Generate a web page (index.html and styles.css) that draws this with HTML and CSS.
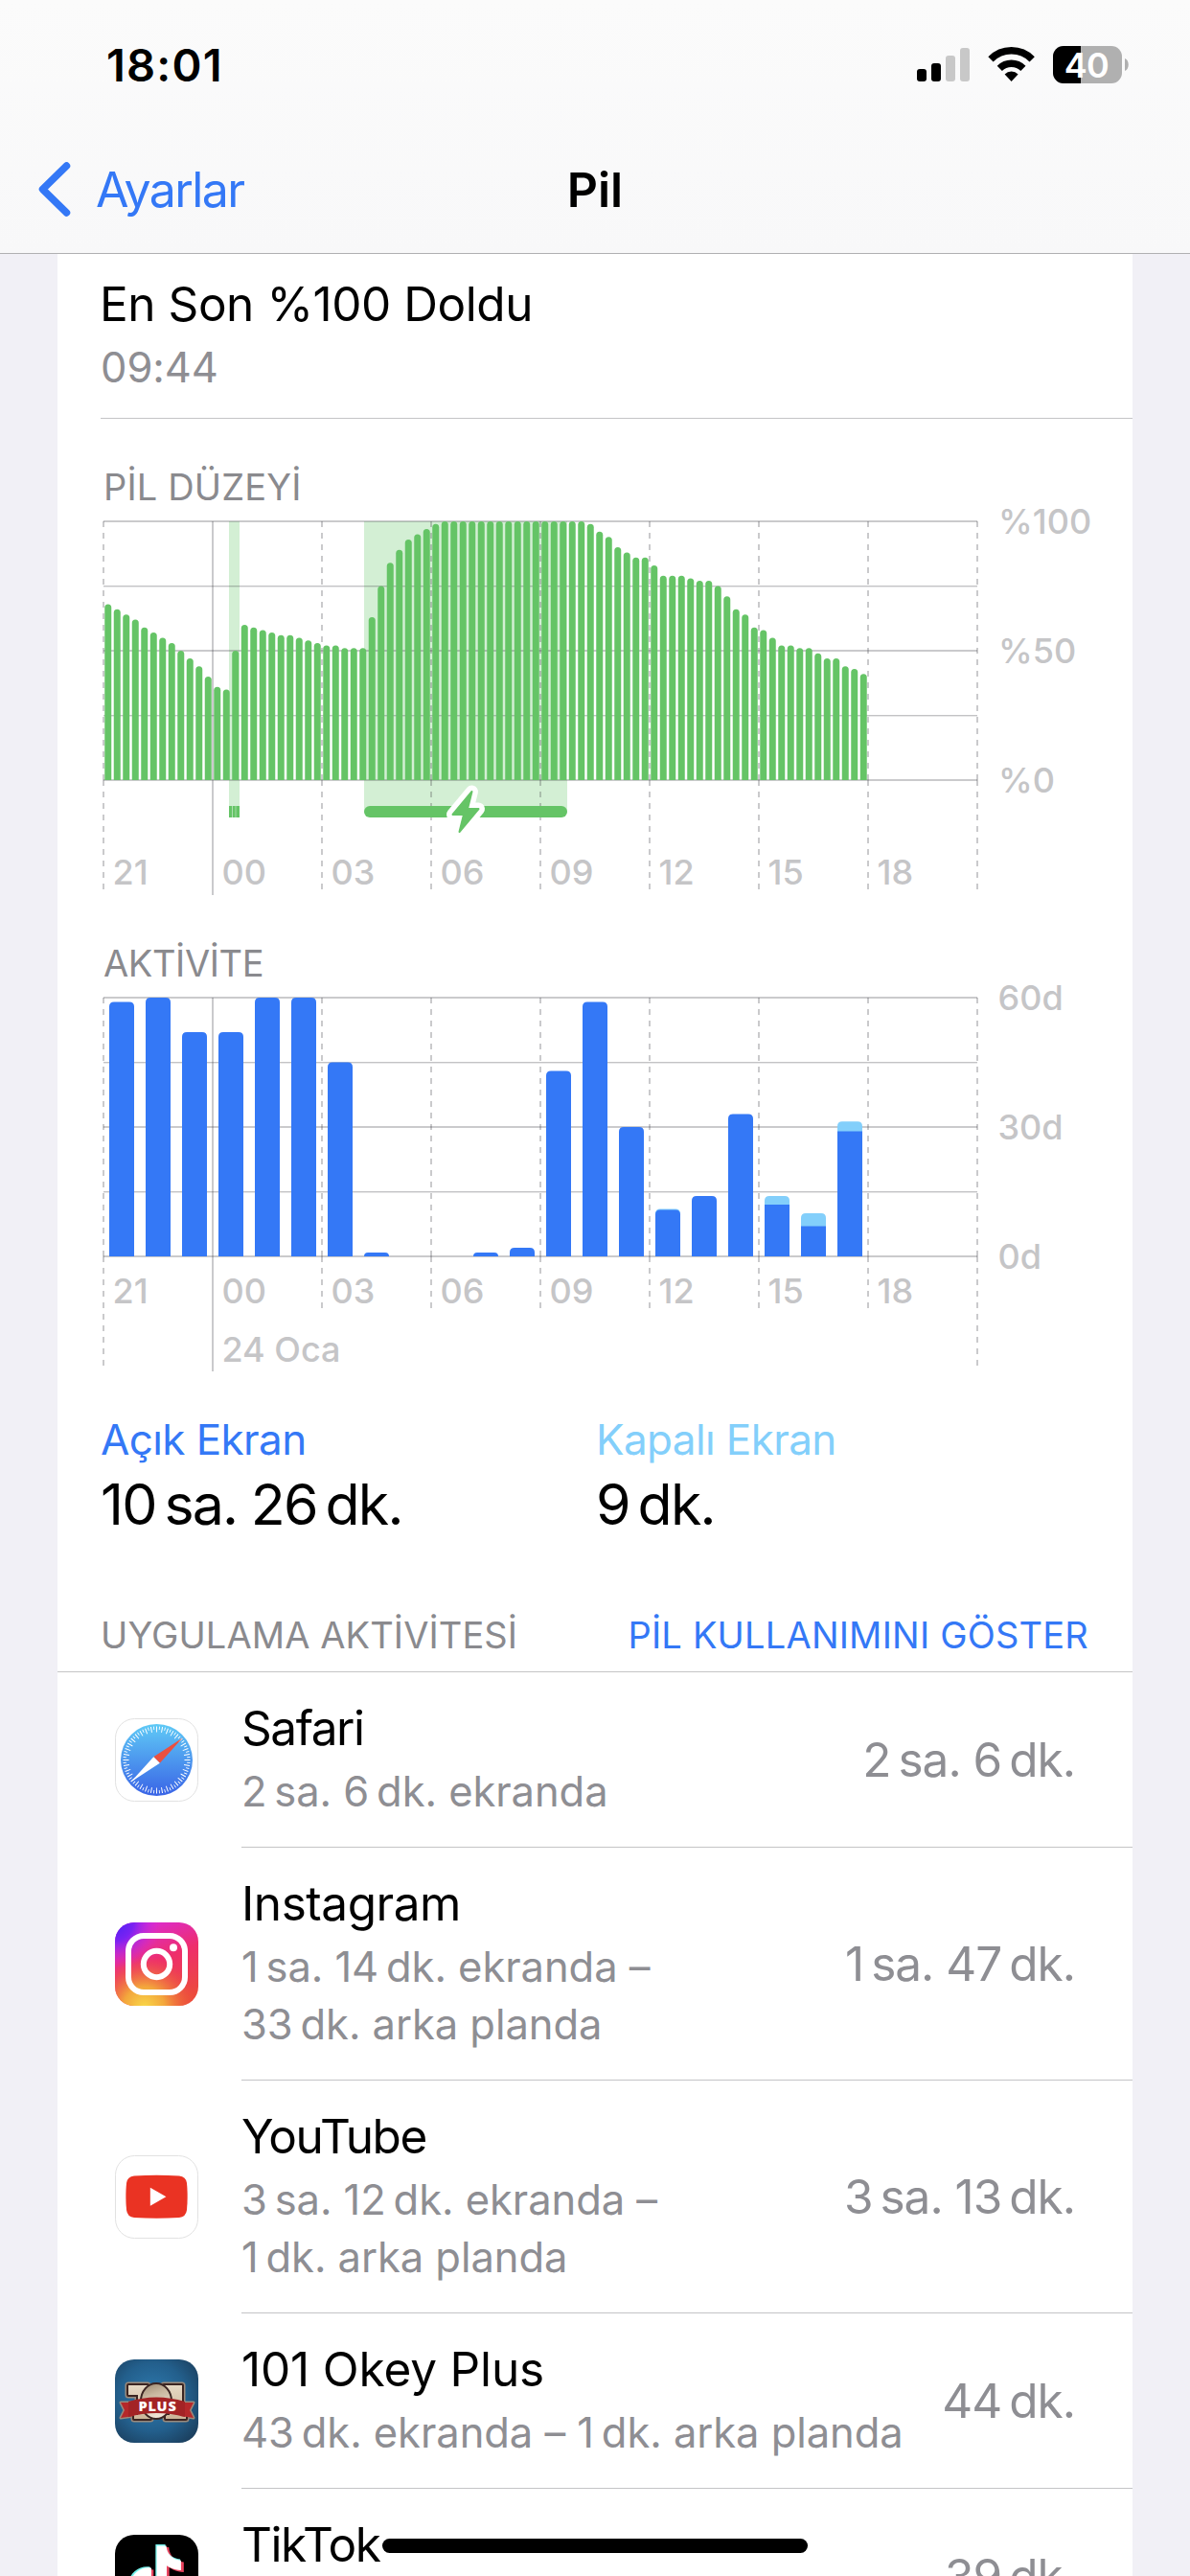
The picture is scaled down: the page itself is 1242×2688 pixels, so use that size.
FILE: index.html
```html
<!DOCTYPE html>
<html lang="tr">
<head>
    <meta charset="UTF-8">
    <meta name="viewport" content="width=device-width, initial-scale=1.0">
    <title>Pil</title>
    <link rel="stylesheet" href="styles.css">
</head>
<body>
    <header class="header">
        <div class="status-bar">
            <span class="clock">18:01</span>
            <svg class="status-icons" width="222" height="40" viewBox="0 0 222 40">
                <rect x="1" y="24" width="10" height="13" rx="3"/>
                <rect x="16" y="18" width="10" height="19" rx="3"/>
                <rect x="31" y="10" width="10" height="27" rx="3" fill="#c8c8c8"/>
                <rect x="46" y="2" width="10" height="35" rx="3" fill="#c8c8c8"/>
                <g fill="none" stroke="#000" stroke-width="7.4">
                    <path d="M78.4 13.9A30.2 30.2 0 0 1 121.6 13.9" transform="translate(-0.4 0)"/>
                    <path d="M87.3 23.3A17.6 17.6 0 0 1 111.9 23.3"/>
                </g>
                <path d="M99.6 37l-7-7.6a10 10 0 0 1 14 0z"/>
                <clipPath id="cell"><rect x="143" y="0" width="72" height="39" rx="11"/></clipPath>
                <g clip-path="url(#cell)">
                    <rect x="143" y="0" width="72" height="39" fill="#b0b0b0"/>
                    <rect x="143" y="0" width="29" height="39"/>
                </g>
                <path d="M218 13c5 2 5 11 0 13z" fill="#b0b0b0"/>
                <text class="cell-text" x="178" y="32.5" text-anchor="middle">40</text>
            </svg>
        </div>
        <nav class="nav-bar">
            <a class="back">
                <svg width="61" height="60" viewBox="0 0 61 60">
                    <path d="M30.5 5L5.5 29.5L30.5 54" fill="none" stroke="#3478f6" stroke-width="7.5" stroke-linecap="round" stroke-linejoin="round"/>
                </svg>
                <span>Ayarlar</span>
            </a>
            <h1>Pil</h1>
        </nav>
    </header>

    <main class="card">
        <section class="last-charge">
            <div class="title">En Son %100 Doldu</div>
            <div class="subtitle">09:44</div>
        </section>

        <h2 class="chart-title">PİL DÜZEYİ</h2>
        <svg id="levelChart" class="chart" width="1122" height="416"></svg>

        <h2 class="chart-title activity-title">AKTİVİTE</h2>
        <svg id="activityChart" class="chart" width="1122" height="416"></svg>

        <section class="totals">
            <div>
                <div class="total-label on">Açık Ekran</div>
                <div class="total-value">10&#8239;sa. 26&#8239;dk.</div>
            </div>
            <div>
                <div class="total-label off">Kapalı Ekran</div>
                <div class="total-value">9&#8239;dk.</div>
            </div>
        </section>

        <div class="list-header">
            <span>UYGULAMA AKTİVİTESİ</span>
            <a>PİL KULLANIMINI GÖSTER</a>
        </div>

        <ul class="apps">
            <li class="app">
                <svg class="icon" viewBox="0 0 87 87">
                    <defs>
                        <linearGradient id="sky" x1="0" y1="0" x2="0" y2="1">
                            <stop offset="0" stop-color="#5fcaf6"/>
                            <stop offset="1" stop-color="#3a64e6"/>
                        </linearGradient>
                    </defs>
                    <rect x=".5" y=".5" width="86" height="86" rx="20" fill="#fff" stroke="#e2e2e2"/>
                    <circle cx="43.5" cy="43.5" r="37.5" fill="url(#sky)"/>
                    <circle cx="43.5" cy="43.5" r="32" fill="none" stroke="#fff" stroke-width="6" stroke-dasharray=".35 1.65" stroke-dashoffset=".17" pathLength="72"/>
                    <circle cx="43.5" cy="43.5" r="33.3" fill="none" stroke="#fff" stroke-width="3.4" stroke-dasharray=".3 1.7" stroke-dashoffset="-.85" pathLength="72"/>
                    <path d="M70.5 20.5L40.3 40.3L46.8 46.8z" fill="#eb5040"/>
                    <path d="M16.5 66.5L40.3 40.3L46.8 46.8z" fill="#fff"/>
                </svg>
                <div class="info">
                    <div class="title tight">Safari</div>
                    <div class="subtitle">2&#8239;sa. 6&#8239;dk. ekranda</div>
                </div>
                <div class="time">2&#8239;sa. 6&#8239;dk.</div>
            </li>
            <li class="app">
                <svg class="icon" viewBox="0 0 87 87">
                    <defs>
                        <linearGradient id="igBase" x1=".2" y1="0" x2=".6" y2="1">
                            <stop offset="0" stop-color="#d82be0"/>
                            <stop offset=".5" stop-color="#ee2e6c"/>
                            <stop offset="1" stop-color="#ec4a3c"/>
                        </linearGradient>
                        <radialGradient id="igGold" cx=".35" cy="1.02" r=".62">
                            <stop offset="0" stop-color="#f9d848"/>
                            <stop offset=".4" stop-color="#f3a63c"/>
                            <stop offset="1" stop-color="#ee5a3a" stop-opacity="0"/>
                        </radialGradient>
                        <radialGradient id="igViolet" cx="0" cy="0" r=".55">
                            <stop offset="0" stop-color="#4a22f4"/>
                            <stop offset=".4" stop-color="#7a22f2"/>
                            <stop offset="1" stop-color="#d82be0" stop-opacity="0"/>
                        </radialGradient>
                    </defs>
                    <rect width="87" height="87" rx="20" fill="url(#igBase)"/>
                    <rect width="87" height="87" rx="20" fill="url(#igGold)"/>
                    <rect width="87" height="87" rx="20" fill="url(#igViolet)"/>
                    <g fill="none" stroke="#fff" stroke-width="6">
                        <rect x="14" y="14" width="59" height="59" rx="16"/>
                        <circle cx="43.5" cy="43.5" r="13.7"/>
                    </g>
                    <circle cx="61" cy="26.3" r="4" fill="#fff"/>
                </svg>
                <div class="info">
                    <div class="title">Instagram</div>
                    <div class="subtitle">1&#8239;sa. 14&#8239;dk. ekranda –<br>33&#8239;dk. arka planda</div>
                </div>
                <div class="time">1&#8239;sa. 47&#8239;dk.</div>
            </li>
            <li class="app">
                <svg class="icon" viewBox="0 0 87 87">
                    <rect x=".5" y=".5" width="86" height="86" rx="20" fill="#fff" stroke="#e2e2e2"/>
                    <path d="M20 21.5Q43.5 20 67 21.5Q74 22 75 29Q76.3 43 75 57Q74 64.5 67 65Q43.5 66.3 20 65Q13 64.5 12 57Q10.7 43 12 29Q13 22 20 21.5z" fill="#ea3323"/>
                    <path d="M36.8 33.7v19l16.6-9.5z" fill="#fff"/>
                </svg>
                <div class="info">
                    <div class="title tight">YouTube</div>
                    <div class="subtitle">3&#8239;sa. 12&#8239;dk. ekranda –<br>1&#8239;dk. arka planda</div>
                </div>
                <div class="time">3&#8239;sa. 13&#8239;dk.</div>
            </li>
            <li class="app">
                <svg class="icon" viewBox="0 0 87 87">
                    <defs>
                        <radialGradient id="felt" cx=".45" cy=".45" r=".68">
                            <stop offset="0" stop-color="#2f7bb0"/>
                            <stop offset=".6" stop-color="#235f8c"/>
                            <stop offset="1" stop-color="#1b3f5e"/>
                        </radialGradient>
                        <linearGradient id="bone" x1="0" y1="0" x2="0" y2="1">
                            <stop offset="0" stop-color="#e6d8c4"/>
                            <stop offset="1" stop-color="#cbb498"/>
                        </linearGradient>
                        <linearGradient id="zero" x1="0" y1="0" x2=".3" y2="1">
                            <stop offset="0" stop-color="#98856e"/>
                            <stop offset=".4" stop-color="#c9b8a0"/>
                            <stop offset="1" stop-color="#efe4d6"/>
                        </linearGradient>
                    </defs>
                    <rect width="87" height="87" rx="20" fill="url(#felt)"/>
                    <g stroke-linejoin="round">
                        <path d="M14 27h20v31h3v4H20v-4h4V37H14zM51 27h19v31h4v4H53v-4h4V37h-6z" fill="#9a8a7c" stroke="#9a8a7c" stroke-width="7"/>
                        <path d="M6 45h14v14l-14 2 4-8zM82 45H68v14l14 2-4-8z" fill="#9a8a7c" stroke="#9a8a7c" stroke-width="3"/>
                        <path d="M14 27h20v31h3v4H20v-4h4V37H14zM51 27h19v31h4v4H53v-4h4V37h-6z" fill="url(#bone)" stroke="#3b2522" stroke-width="4"/>
                        <path d="M14 27h20v31h3v4H20v-4h4V37H14zM51 27h19v31h4v4H53v-4h4V37h-6z" fill="url(#bone)"/>
                        <ellipse cx="43" cy="43.5" rx="16" ry="18.5" fill="url(#zero)" stroke="#3b2522" stroke-width="2"/>
                        <path d="M6 45h14v14l-14 2 4-8zM82 45H68v14l14 2-4-8z" fill="#b5282a"/>
                        <path d="M14 44q29-9 59 0v16q-30-8-59 0z" fill="#a32325"/>
                    </g>
                    <text class="plus" x="44.5" y="54" text-anchor="middle">PLUS</text>
                </svg>
                <div class="info">
                    <div class="title okey">101 Okey Plus</div>
                    <div class="subtitle">43&#8239;dk. ekranda – 1&#8239;dk. arka planda</div>
                </div>
                <div class="time">44&#8239;dk.</div>
            </li>
            <li class="app">
                <svg class="icon" viewBox="0 0 87 87">
                    <defs>
                        <path id="note" d="M12.525.02c1.31-.02 2.61-.01 3.91-.02.08 1.53.63 3.09 1.75 4.17 1.12 1.11 2.7 1.62 4.24 1.79v4.03c-1.44-.05-2.89-.35-4.2-.97-.57-.26-1.1-.59-1.62-.93-.01 2.92.01 5.84-.02 8.75-.08 1.4-.54 2.79-1.35 3.94-1.31 1.92-3.58 3.17-5.91 3.21-1.43.08-2.86-.31-4.08-1.03-2.02-1.19-3.44-3.37-3.65-5.71-.02-.5-.03-1-.01-1.49.18-1.9 1.12-3.72 2.58-4.96 1.66-1.44 3.98-2.13 6.15-1.72.02 1.48-.04 2.96-.04 4.44-.99-.32-2.15-.23-3.02.37-.63.41-1.11 1.04-1.36 1.75-.21.51-.15 1.07-.14 1.61.24 1.64 1.82 3.02 3.5 2.87 1.12-.01 2.19-.66 2.77-1.61.19-.33.4-.67.41-1.06.1-1.79.06-3.57.07-5.36.01-4.03-.01-8.05.02-12.07z"/>
                    </defs>
                    <rect width="87" height="87" rx="20"/>
                    <use href="#note" transform="translate(13.5 13) scale(2.6)" fill="#e9445f"/>
                    <use href="#note" transform="translate(9.8 10) scale(2.6)" fill="#74f0ea"/>
                    <use href="#note" transform="translate(11.7 11.5) scale(2.55)" fill="#fff"/>
                </svg>
                <div class="info">
                    <div class="title tight">TikTok</div>
                </div>
                <div class="time">39&#8239;dk.</div>
            </li>
        </ul>
    </main>

    <div class="home-indicator"></div>

    <script>
        const LEFT = 48, TOP = 13, HEIGHT = 270, STEP = 114, WIDTH = STEP * 8;
        const BOTTOM = TOP + HEIGHT;
        const hours = ["21", "00", "03", "06", "09", "12", "15", "18"];

        // Battery level every 15 minutes, in percent
        const levels = [
            68, 66, 64, 62, 59, 57, 55, 53, 50, 47, 44, 40,
            36, 35, 50, 60, 59, 58, 57, 56, 56, 55, 54, 53,
            52, 52, 51, 51, 51, 63, 75, 84, 89, 93, 95, 97,
            99, 100, 100, 100, 100, 100, 100, 100, 100, 100, 100, 100,
            100, 100, 100, 100, 100, 99, 96, 94, 90, 88, 86, 86,
            83, 79, 79, 79, 78, 77, 77, 75, 71, 66, 64, 59,
            58, 55, 52, 52, 51, 51, 49, 47, 47, 44, 43, 41
        ];

        // Minutes per hour: [total, screen on]
        const activity = [
            [59, 59], [60, 60], [52, 52], [52, 52], [60, 60], [60, 60], [45, 45],
            [0.9, 0.9], [0, 0], [0, 0], [0.9, 0.9], [2, 2], [43, 43], [59, 59],
            [30, 30], [11, 10.8], [14, 14], [33, 33], [14, 12], [10, 7], [31.3, 29]
        ];

        function rect(x, y, w, h, cls) {
            return `<rect class="${cls}" x="${x}" y="${y}" width="${w}" height="${h}"/>`;
        }

        function text(x, y, value) {
            return `<text class="axis" x="${x}" y="${y}">${value}</text>`;
        }

        function topRounded(x, y, w, h, r, cls) {
            r = Math.min(r, h);
            return `<path class="${cls}" d="M${x} ${y + h}V${y + r}Q${x} ${y} ${x + r} ${y}H${x + w - r}Q${x + w} ${y} ${x + w} ${y + r}V${y + h}z"/>`;
        }

        function grid(ends, labelY) {
            let out = "";
            for (let i = 0; i <= 4; i++) {
                const y = TOP + i * HEIGHT / 4;
                out += i % 2
                    ? rect(LEFT, Math.floor(y), WIDTH, 1.4, "line thin")
                    : rect(LEFT, y - 1, WIDTH, 2, "line");
            }
            for (let i = 0; i <= 8; i++) {
                const x = LEFT + i * STEP;
                const cls = i === 1 ? "rule" : "rule dashed";
                out += `<path class="${cls}" d="M${x} ${TOP}V${BOTTOM}M${x} ${BOTTOM}V${ends[i]}"/>`;
                if (hours[i]) out += text(x + 9.5, labelY, hours[i]);
            }
            return out;
        }

        function drawLevels() {
            let out = rect(179, TOP, 11, 297, "charging") + rect(320, TOP, 212, 303, "charging");
            out += grid([397, 403, 397, 397, 397, 397, 397, 397, 397], 392);
            levels.forEach((v, i) => {
                const h = v * HEIGHT / 100;
                out += topRounded(LEFT + 1.25 + i * 9.5, BOTTOM - h, 7, h, 3.5, "level");
            });
            out += rect(179, 310, 3.3, 12, "level") + rect(182.7, 310, 3.1, 12, "level") + rect(186.2, 310, 3.8, 12, "level");
            out += `<rect class="level" x="320" y="310" width="212" height="12" rx="6"/>`;
            // Charging bolt with a white outline
            const bolt = "M432.5 295L412.5 319H424L419.5 337L439.5 313H428z";
            out += `<path class="bolt-outline" d="${bolt}"/><path class="bolt" d="${bolt}"/>`;
            out += text(982, 26.3, "%100") + text(982, 161.3, "%50") + text(982, 296.3, "%0");
            document.getElementById("levelChart").innerHTML = out;
        }

        function drawActivity() {
            let out = grid([397, 403, 337, 337, 337, 337, 337, 337, 397], 332);
            activity.forEach(([total, on], i) => {
                const x = LEFT + 6 + i * 38;
                const h = total * 4.5, hOn = on * 4.5;
                if (!total) return;
                if (total > on) {
                    out += topRounded(x, BOTTOM - h, 26, h, 5, "screen-off");
                    out += total - on < 1
                        ? topRounded(x, BOTTOM - hOn, 26, hOn, 5, "screen-on")
                        : rect(x, BOTTOM - hOn, 26, hOn, "screen-on");
                } else {
                    out += topRounded(x, BOTTOM - h, 26, h, 5, "screen-on");
                }
            });
            out += text(LEFT + STEP + 9.5, 393, "24 Oca");
            out += text(981.5, 26.3, "60d") + text(981.5, 161.3, "30d") + text(981.5, 296.3, "0d");
            document.getElementById("activityChart").innerHTML = out;
        }

        drawLevels();
        drawActivity();
    </script>
</body>
</html>
```
FILE: styles.css
```css
* {
    box-sizing: border-box;
}
body {
    margin: 0;
    width: 1242px;
    height: 2688px;
    overflow: hidden;
    background-color: #f1f0f6;
    font-family: Inter, "Liberation Sans", sans-serif;
    color: #000;
}
h1, h2, ul {
    margin: 0;
    padding: 0;
    font-weight: normal;
    list-style: none;
}
svg {
    overflow: visible;
}

/* Header */
.header {
    height: 265px;
    background: linear-gradient(#fbfbfb, #f8f8f9);
    border-bottom: 1px solid #b0b0b2;
}
.status-bar {
    display: flex;
    justify-content: space-between;
    align-items: center;
    padding: 40px 64px 72px 111px;
}
.clock {
    font-size: 47px;
    font-weight: 600;
    line-height: 56px;
    letter-spacing: 1.2px;
}
.cell-text {
    font-size: 36px;
    font-weight: 600;
    letter-spacing: -0.5px;
    fill: #fff;
}
.nav-bar {
    display: grid;
    grid-template-columns: 1fr auto 1fr;
    height: 60px;
    font-size: 50px;
    line-height: 60px;
}
.back {
    display: flex;
    padding-left: 39px;
    color: #3478f6;
    letter-spacing: -1.6px;
}
.nav-bar h1 {
    font-size: 50px;
    font-weight: 600;
}

/* Card */
.card {
    margin: 0 60px;
    background-color: #fff;
}
.title {
    font-size: 49.5px;
    line-height: 60px;
    letter-spacing: -0.45px;
    white-space: nowrap;
}
.title.tight {
    letter-spacing: -1.45px;
}
.title.okey {
    letter-spacing: -0.15px;
}
.subtitle {
    margin-top: 6px;
    font-size: 43.5px;
    line-height: 60px;
    letter-spacing: -0.05px;
    color: #8e8e93;
    white-space: nowrap;
}
.last-charge {
    height: 172px;
    margin-left: 45px;
    padding-top: 22px;
    border-bottom: 1px solid #c4c4c6;
}
.last-charge .title {
    margin-left: -1px;
}

/* Charts */
.chart-title {
    margin-top: 48px;
    padding-left: 48px;
    font-size: 38px;
    line-height: 46px;
    letter-spacing: 0.15px;
    color: #8a8a8e;
}
.activity-title {
    margin-top: 35px;
    letter-spacing: -0.4px;
}
.chart {
    display: block;
}
.axis {
    font-size: 36px;
    font-weight: 500;
    fill: #c5c5c7;
}
.line {
    fill: #3c3c43;
    opacity: 0.27;
}
.line.thin {
    opacity: 0.31;
}
.rule {
    fill: none;
    stroke: #3c3c43;
    stroke-width: 2;
    opacity: 0.27;
}
.dashed {
    stroke-dasharray: 6 6;
}
.charging {
    fill: #d3efd4;
}
.level, .bolt {
    fill: #65c466;
}
.bolt {
    stroke: #65c466;
    stroke-width: 2;
    stroke-linejoin: round;
}
.bolt-outline {
    fill: #fff;
    stroke: #fff;
    stroke-width: 13;
    stroke-linejoin: round;
}
.screen-on {
    fill: #3478f6;
}
.screen-off {
    fill: #83cffb;
}

/* Totals */
.totals {
    display: grid;
    grid-template-columns: 517px 1fr;
    padding: 31px 0 0 45px;
}
.total-label {
    font-size: 44px;
    line-height: 54px;
    letter-spacing: -0.6px;
}
.total-label.on {
    color: #3478f6;
}
.total-label.off {
    color: #83cffb;
}
.total-value {
    margin-top: 5px;
    font-size: 59px;
    line-height: 72px;
    letter-spacing: -1.85px;
}

/* App list */
.list-header {
    display: flex;
    justify-content: space-between;
    margin-top: 77px;
    padding: 0 46px 15px 45px;
    border-bottom: 1px solid #c4c4c6;
    font-size: 38px;
    line-height: 46px;
    letter-spacing: 0.1px;
    color: #8a8a8e;
}
.list-header a {
    color: #3478f6;
    letter-spacing: 0.2px;
}
.app {
    display: flex;
    align-items: center;
    padding-left: 60px;
}
.app:last-child {
    height: 183px;
}
.icon {
    flex: none;
    width: 87px;
    height: 87px;
    margin-right: 45px;
}
.plus {
    font-family: "Open Sans", sans-serif;
    font-size: 14.5px;
    font-weight: 800;
    letter-spacing: 0.8px;
    fill: #fff;
}
.info {
    flex: 1;
    align-self: stretch;
    padding: 28px 0;
    border-bottom: 1px solid #c4c4c6;
}
.time {
    align-self: stretch;
    display: flex;
    align-items: center;
    padding-right: 60px;
    border-bottom: 1px solid #c4c4c6;
    font-size: 49.5px;
    letter-spacing: -1px;
    color: #8e8e93;
}

.home-indicator {
    position: absolute;
    left: 399px;
    top: 2649px;
    width: 444px;
    height: 15px;
    border-radius: 8px;
    background-color: #000;
}
```
